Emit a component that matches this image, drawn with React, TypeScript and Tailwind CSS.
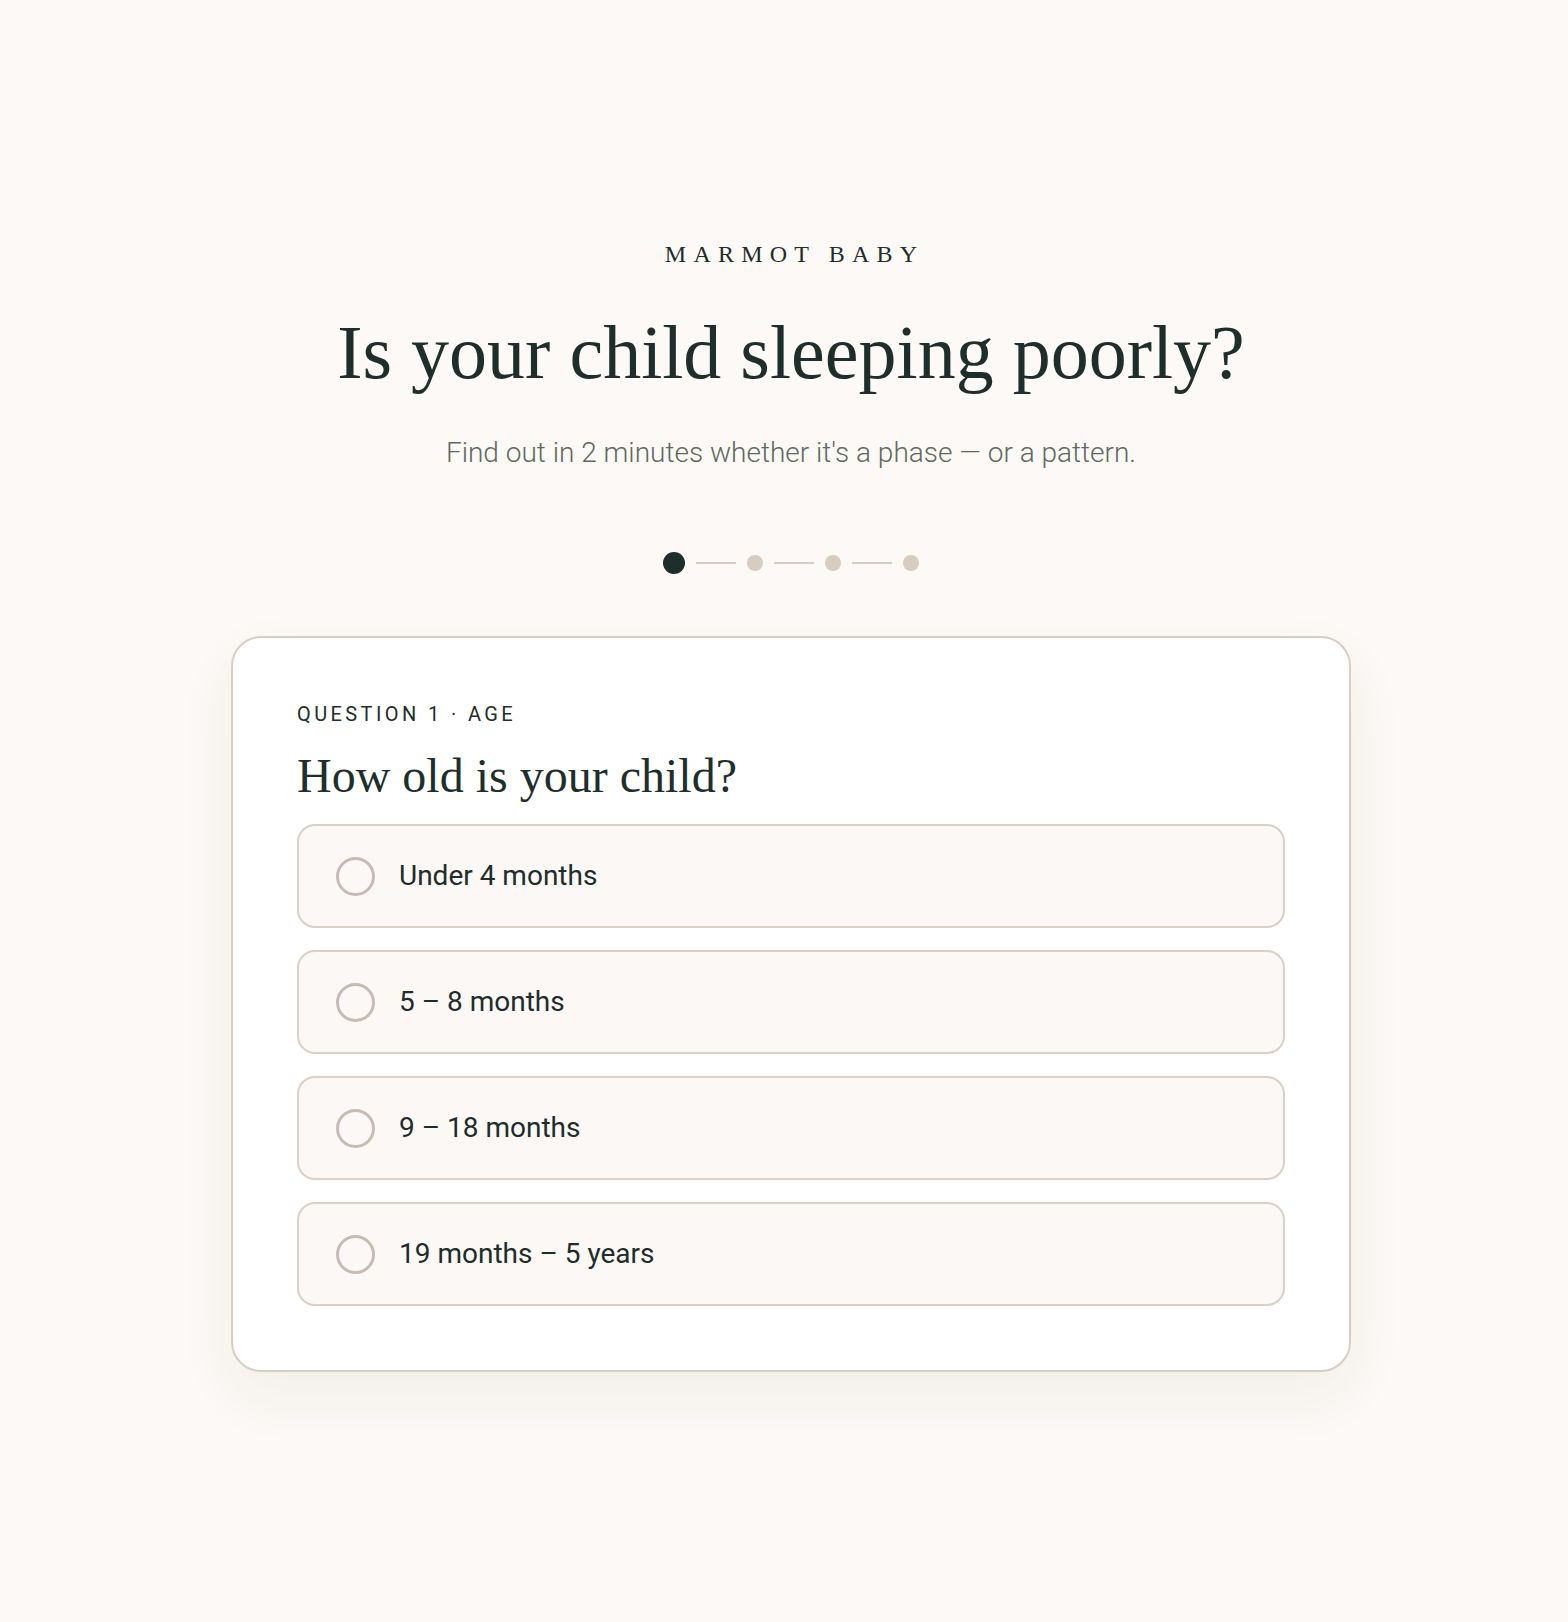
import React from "react";

const serif = { fontFamily: '"Liberation Serif", "Times New Roman", serif' };
const sans = { fontFamily: 'Roboto, "Noto Sans", Arial, sans-serif' };

const options = ["Under 4 months", "5 – 8 months", "9 – 18 months", "19 months – 5 years"];

export default function App() {
  return (
    <div className="min-h-screen w-full bg-[#fcf9f6] pl-[14px]" style={sans}>
      <div className="flex flex-col items-center pt-[239px] pb-[250px]">
        <div
          className="text-[24px] leading-[30px] tracking-[0.3em] pl-[0.3em] text-[#1d2e2b]"
          style={serif}
        >
          MARMOT BABY
        </div>
        <h1
          className="mt-[45px] text-[76px] leading-[77px] text-[#1d2e2b] font-normal"
          style={serif}
        >
          Is your child sleeping poorly?
        </h1>
        <p className="mt-[45px] text-[28px] leading-[34px] font-light text-[#5f6a5e]">
          Find out in 2 minutes whether it's a phase — or a pattern.
        </p>
        <div className="mt-[82px] flex items-center gap-[11px]">
          <div className="w-[22px] h-[22px] rounded-full bg-[#1d2e2b]" />
          <div className="w-[40px] h-[2px] bg-[#d6ccbf]" />
          <div className="w-[16px] h-[16px] rounded-full bg-[#d6ccbf]" />
          <div className="w-[40px] h-[2px] bg-[#d6ccbf]" />
          <div className="w-[16px] h-[16px] rounded-full bg-[#d6ccbf]" />
          <div className="w-[40px] h-[2px] bg-[#d6ccbf]" />
          <div className="w-[16px] h-[16px] rounded-full bg-[#d6ccbf]" />
        </div>
        <div className="mt-[62px] w-[1120px] rounded-[30px] border-2 border-[#d8cfc4] bg-white px-[64px] pt-[64px] pb-[64px] shadow-[0_24px_60px_rgba(80,60,30,0.06)]">
          <div className="text-[20px] leading-[24px] tracking-[0.17em] font-normal text-[#1d2e2b]">
            QUESTION 1 · AGE
          </div>
          <h2
            className="mt-[22px] text-[48px] leading-[55px] text-[#1d2e2b] font-normal"
            style={serif}
          >
            How old is your child?
          </h2>
          <div className="mt-[21px] flex flex-col gap-[22px]">
            {options.map((o) => (
              <div
                key={o}
                className="h-[104px] rounded-[18px] border-2 border-[#d9d1c7] bg-[#fbf8f5] pl-[37px] flex items-center gap-[24px]"
              >
                <div className="w-[39px] h-[39px] rounded-full border-[3px] border-[#c6bdb2]" />
                <span className="text-[28px] leading-[34px] text-[#1f2d2a]">{o}</span>
              </div>
            ))}
          </div>
        </div>
      </div>
    </div>
  );
}
